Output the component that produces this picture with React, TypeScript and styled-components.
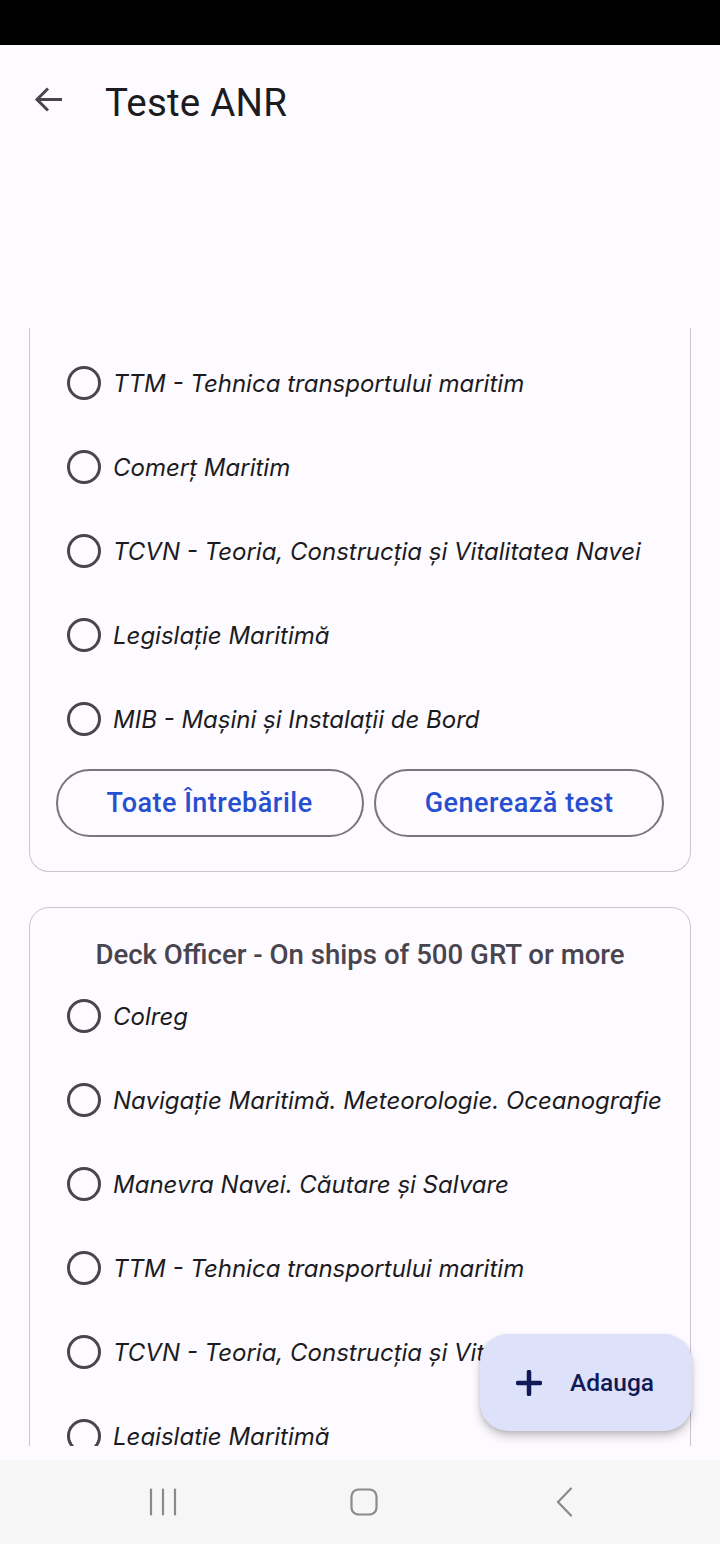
import React from "react";
import styled, { createGlobalStyle } from "styled-components";

const GlobalStyle = createGlobalStyle`
  html, body { margin: 0; padding: 0; background: #fdfbff; }
  body { font-family: Roboto, "Noto Sans", sans-serif; }
  * { box-sizing: border-box; }
`;

const Screen = styled.div`
  width: 720px;
  height: 1544px;
  display: flex;
  flex-direction: column;
  background: #fdfbff;
  position: relative;
  overflow: hidden;
`;

const StatusBar = styled.div`
  height: 45px;
  background: #000;
  flex: none;
`;

const TopBar = styled.header`
  height: 115px;
  display: flex;
  align-items: center;
  padding-left: 34px;
  gap: 42px;
  flex: none;
`;

const BackButton = styled.button`
  width: 29px;
  height: 29px;
  padding: 0;
  border: none;
  background: none;
  display: flex;
  align-items: center;
  justify-content: center;
  color: #49454f;
  margin-top: -6px;
`;

const Title = styled.h1`
  margin: 0;
  font-size: 38.5px;
  font-weight: 400;
  color: #1c1b1f;
  letter-spacing: 0.2px;
`;

const Spacer = styled.div`
  height: 168px;
  flex: none;
`;

const Viewport = styled.main`
  height: 1118px;
  overflow: hidden;
  display: flex;
  flex-direction: column;
  gap: 35px;
  flex: none;
`;

const Card = styled.section<{ $cutTop?: boolean }>`
  margin: 0 29px;
  border: 1.5px solid #cac4d0;
  border-radius: 20px;
  display: flex;
  flex-direction: column;
  flex: none;
  padding: ${(p) => (p.$cutTop ? "13px 0 34px" : "28px 0 34px")};
  ${(p) =>
    p.$cutTop &&
    `border-top: none; border-top-left-radius: 0; border-top-right-radius: 0;`}
`;

const CardTitle = styled.h2`
  margin: 0;
  height: 38px;
  line-height: 38px;
  text-align: center;
  font-size: 27.6px;
  font-weight: 500;
  color: #49454f;
`;

const Option = styled.label`
  height: 84px;
  display: flex;
  align-items: center;
  padding-left: 37px;
  gap: 12px;
  cursor: pointer;
`;

const Radio = styled.span`
  width: 34px;
  height: 34px;
  border-radius: 50%;
  border: 3.3px solid #49454f;
  flex: none;
`;

const OptionText = styled.span`
  font-family: Inter, Roboto, sans-serif;
  font-size: 24px;
  font-style: italic;
  font-weight: 400;
  color: #1c1b1f;
  white-space: nowrap;
`;

const Actions = styled.div`
  display: flex;
  justify-content: center;
  gap: 10px;
  margin-top: 8px;
`;

const OutlineButton = styled.button`
  height: 68px;
  padding: 0 49px;
  border: 2px solid #79747e;
  border-radius: 34px;
  background: transparent;
  font-family: Roboto, sans-serif;
  font-size: 27px;
  font-weight: 500;
  letter-spacing: 0.5px;
  color: #2750d0;
  white-space: nowrap;
`;

const Fab = styled.button`
  position: absolute;
  left: 480px;
  top: 1334px;
  width: 212px;
  height: 97px;
  border: none;
  border-radius: 28px;
  background: #dde1f9;
  box-shadow: 0 6px 10px rgba(0, 0, 0, 0.18), 0 2px 4px rgba(0, 0, 0, 0.12);
  display: flex;
  align-items: center;
  padding-left: 36px;
  gap: 28px;
  font-family: Roboto, sans-serif;
  font-size: 24.5px;
  font-weight: 500;
  color: #0f1a57;
`;

const NavBar = styled.nav`
  position: absolute;
  left: 0;
  right: 0;
  bottom: 0;
  height: 84px;
  background: #f6f6f6;
  display: grid;
  grid-template-columns: repeat(3, 1fr);
  align-items: center;
  justify-items: center;
  padding: 0 55px 0 62px;
`;

const NavIcon = styled.svg`
  display: block;
`;

const card1 = [
  "TTM - Tehnica transportului maritim",
  "Comerț Maritim",
  "TCVN - Teoria, Construcția și Vitalitatea Navei",
  "Legislație Maritimă",
  "MIB - Mașini și Instalații de Bord",
];

const card2 = [
  "Colreg",
  "Navigație Maritimă. Meteorologie. Oceanografie",
  "Manevra Navei. Căutare și Salvare",
  "TTM - Tehnica transportului maritim",
  "TCVN - Teoria, Construcția și Vitalitatea Navei",
  "Legislație Maritimă",
];

const OptionRow = ({ text }: { text: string }) => (
  <Option>
    <Radio />
    <OptionText>{text}</OptionText>
  </Option>
);

export default function App() {
  return (
    <>
      <GlobalStyle />
      <Screen>
        <StatusBar />
        <TopBar>
          <BackButton aria-label="Înapoi">
            <svg width="29" height="29" viewBox="0 0 29 29" fill="none">
              <path
                d="M28 14.5H3M14 3.5L3 14.5L14 25.5"
                stroke="currentColor"
                strokeWidth="3"
              />
            </svg>
          </BackButton>
          <Title>Teste ANR</Title>
        </TopBar>
        <Spacer />
        <Viewport>
          <Card $cutTop>
            {card1.map((t) => (
              <OptionRow key={t} text={t} />
            ))}
            <Actions>
              <OutlineButton>Toate Întrebările</OutlineButton>
              <OutlineButton>Generează test</OutlineButton>
            </Actions>
          </Card>
          <Card>
            <CardTitle>Deck Officer - On ships of 500 GRT or more</CardTitle>
            {card2.map((t) => (
              <OptionRow key={t} text={t} />
            ))}
          </Card>
        </Viewport>
        <Fab>
          <svg width="26" height="26" viewBox="0 0 26 26">
            <path d="M13 2V24M2 13H24" stroke="currentColor" strokeWidth="4.5" strokeLinecap="round" />
          </svg>
          Adauga
        </Fab>
        <NavBar>
          <NavIcon width="28" height="28" viewBox="0 0 28 28" fill="none" stroke="#8a8a8a" strokeWidth="2.2" strokeLinecap="round">
            <path d="M2 1.5V26.5M14 1.5V26.5M26 1.5V26.5" />
          </NavIcon>
          <NavIcon width="28" height="28" viewBox="0 0 28 28" fill="none" stroke="#8a8a8a" strokeWidth="2.2">
            <rect x="1.5" y="1.5" width="25" height="25" rx="7" />
          </NavIcon>
          <NavIcon width="28" height="30" viewBox="0 0 28 30" fill="none" stroke="#8a8a8a" strokeWidth="2.2" strokeLinecap="round">
            <path d="M20 1.5L7 15L20 28.5" />
          </NavIcon>
        </NavBar>
      </Screen>
    </>
  );
}
